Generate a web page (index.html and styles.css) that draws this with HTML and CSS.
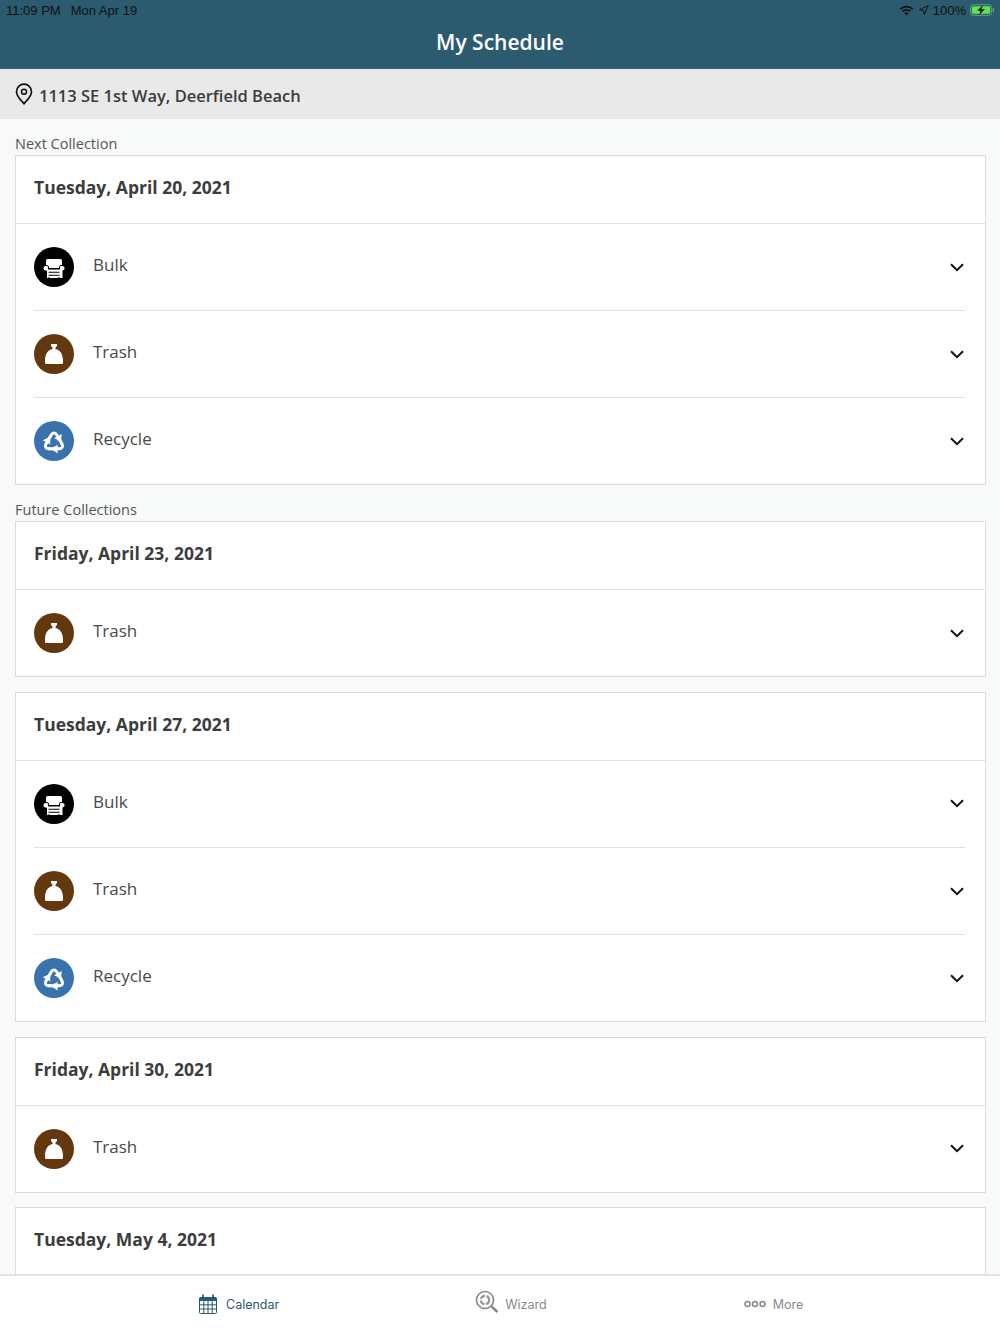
FILE: index.html
```html
<!DOCTYPE html>
<html lang="en">
<head>
<meta charset="utf-8">
<title>My Schedule</title>
<link rel="stylesheet" href="styles.css">
</head>
<body>
<svg class="defs" width="0" height="0" aria-hidden="true">
  <symbol id="chev" viewBox="0 0 14 9"><path d="M1 1.200 7 7.200 13 1.200" fill="none" stroke="#111" stroke-width="2"/></symbol>
  <symbol id="bulk" viewBox="0 0 40 40">
    <path fill="#fff" d="M13.500 12h13a1.500 1.500 0 0 1 1.500 1.500V18h-.5a2.500 2.500 0 0 0-2.500 2.500V21H15v-.5a2.500 2.500 0 0 0-2.500-2.500H12v-4.500a1.500 1.500 0 0 1 1.500-1.500z"/>
    <path fill="#fff" d="M11.500 19h1.200a1.300 1.300 0 0 1 1.300 1.300V22.500h12v-2.200a1.300 1.300 0 0 1 1.300-1.300h1.200a2.200 2.200 0 0 1 1 4.100l-1 .5V31H13v-6.900l-1-.5a2.200 2.200 0 0 1-.5-4.600z"/>
    <path fill="#000" d="M14.500 24.800h11v1H14.500zM14.500 27.800h11v1H14.500zM14.500 30h1v1h-1zM24.500 30h1v1h-1z"/>
  </symbol>
  <symbol id="trash" viewBox="0 0 40 40">
    <path fill="#fff" d="M17 10h6v1.800l-1.500 2v1.100c4.500.7 7.300 5 7.500 11.100v2.500a1.500 1.500 0 0 1-1.500 1.500h-15a1.500 1.500 0 0 1-1.500-1.500V26c.2-6.100 3-10.400 7.500-11.100v-1.100l-1.500-2z"/>
  </symbol>
  <symbol id="recycle" viewBox="0 0 40 40">
    <g id="rc-arrow" fill="#fff">
      <path d="M12.800 18.200 16.200 12.700Q18 10.500 20 10.500T23.800 12.700L24.900 14.500 27.700 12.900 27 20.600 20.100 17.300 22.300 16 21 14C20.300 13.100 19.700 13.100 19 14L16.500 18.200 16.300 20.300z"/>
    </g>
    <g fill="#fff" transform="rotate(120 20 21.500)"><path d="M12.800 18.200 16.200 12.700Q18 10.500 20 10.500T23.800 12.700L24.900 14.500 27.700 12.900 27 20.600 20.100 17.300 22.300 16 21 14C20.300 13.100 19.700 13.100 19 14L16.500 18.200 16.300 20.300z"/></g>
    <g fill="#fff" transform="rotate(240 20 21.500)"><path d="M12.800 18.200 16.200 12.700Q18 10.500 20 10.500T23.800 12.700L24.900 14.500 27.700 12.900 27 20.600 20.100 17.300 22.300 16 21 14C20.300 13.100 19.700 13.100 19 14L16.500 18.200 16.300 20.300z"/></g>
  </symbol>
</svg>
<div class="app">
  <header class="topbar">
    <div class="status">
      <div class="status-left"><span>11:09 PM</span><span>Mon Apr 19</span></div>
      <div class="status-right">
        <svg class="wifi" viewBox="0 0 16 12" width="15" height="11"><path d="M8 11.500 5.700 9a3.300 3.300 0 0 1 4.600 0zM4.500 7.800 3.200 6.400a6.900 6.900 0 0 1 9.600 0l-1.300 1.400a5 5 0 0 0-7 0zM2 5.200.6 3.800a10.600 10.600 0 0 1 14.800 0L14 5.200a8.700 8.700 0 0 0-12 0z" fill="#111"/></svg>
        <svg class="loc" viewBox="0 0 10 10" width="10" height="10"><path d="M9.300.7 5.300 9.300 4.500 5.500.7 4.700z" fill="none" stroke="#111" stroke-width="1"/></svg>
        <span>100%</span>
        <svg class="batt" viewBox="0 0 26 12" width="25" height="12"><rect x=".5" y=".5" width="22" height="11" rx="3" fill="none" stroke="#5fae60"/><rect x="2" y="2" width="19" height="8" rx="1.500" fill="#5fe05f"/><rect x="23.500" y="4" width="1.500" height="4" rx=".7" fill="#5fae60"/><path d="M13.500 .8 7.500 6.800h3.600L9.500 11.200l6-6h-3.600z" fill="#111"/></svg>
      </div>
    </div>
    <h1 class="title">My Schedule</h1>
  </header>
  <div class="address">
    <svg class="pin" viewBox="0 0 18 22" width="18" height="22"><path d="M9 1.200a7.500 7.500 0 0 1 7.500 7.500c0 4.800-4.600 8.600-7.500 12-2.900-3.400-7.500-7.200-7.500-12A7.500 7.500 0 0 1 9 1.200z" fill="none" stroke="#111" stroke-width="1.700"/><circle cx="9" cy="8.700" r="2.500" fill="none" stroke="#111" stroke-width="1.500"/></svg>
    <span class="address-text">1113 SE 1st Way, Deerfield Beach</span>
  </div>
  <main class="content">
    <div class="label">Next Collection</div>
    <section class="card">
      <h2 class="date">Tuesday, April 20, 2021</h2>
      <div class="row"><span class="badge bulk-bg"><svg><use href="#bulk"/></svg></span><span class="name">Bulk</span><svg class="chev"><use href="#chev"/></svg></div>
      <div class="row"><span class="badge trash-bg"><svg><use href="#trash"/></svg></span><span class="name">Trash</span><svg class="chev"><use href="#chev"/></svg></div>
      <div class="row"><span class="badge recycle-bg"><svg><use href="#recycle"/></svg></span><span class="name">Recycle</span><svg class="chev"><use href="#chev"/></svg></div>
    </section>
    <div class="label label-next">Future Collections</div>
    <section class="card">
      <h2 class="date">Friday, April 23, 2021</h2>
      <div class="row"><span class="badge trash-bg"><svg><use href="#trash"/></svg></span><span class="name">Trash</span><svg class="chev"><use href="#chev"/></svg></div>
    </section>
    <section class="card gap">
      <h2 class="date">Tuesday, April 27, 2021</h2>
      <div class="row"><span class="badge bulk-bg"><svg><use href="#bulk"/></svg></span><span class="name">Bulk</span><svg class="chev"><use href="#chev"/></svg></div>
      <div class="row"><span class="badge trash-bg"><svg><use href="#trash"/></svg></span><span class="name">Trash</span><svg class="chev"><use href="#chev"/></svg></div>
      <div class="row"><span class="badge recycle-bg"><svg><use href="#recycle"/></svg></span><span class="name">Recycle</span><svg class="chev"><use href="#chev"/></svg></div>
    </section>
    <section class="card gap">
      <h2 class="date">Friday, April 30, 2021</h2>
      <div class="row"><span class="badge trash-bg"><svg><use href="#trash"/></svg></span><span class="name">Trash</span><svg class="chev"><use href="#chev"/></svg></div>
    </section>
    <section class="card gap">
      <h2 class="date">Tuesday, May 4, 2021</h2>
    </section>
  </main>
  <nav class="tabs">
    <div class="tab tab-active tab-cal">
      <svg viewBox="0 0 20 22" width="20" height="22"><path d="M1 5.500a1.500 1.500 0 0 1 1.500-1.500h15A1.500 1.500 0 0 1 19 5.500V8H1z" fill="#2c5a6e"/><path d="M5 1.500v4M15 1.500v4" stroke="#2c5a6e" stroke-width="1.800"/><path d="M1.500 7.500h17v12a1 1 0 0 1-1 1h-15a1 1 0 0 1-1-1zM1.500 11.800h17M1.500 16h17M5.800 7.500v13M10 7.500v13M14.200 7.500v13" fill="none" stroke="#2c5a6e" stroke-width="1"/></svg>
      <span>Calendar</span>
    </div>
    <div class="tab tab-wiz">
      <svg viewBox="0 0 24 24" width="24" height="24"><circle cx="10" cy="10" r="8.500" fill="none" stroke="#888" stroke-width="1.600"/><circle cx="10" cy="10" r="4.200" fill="none" stroke="#999" stroke-width="2.200" stroke-dasharray="5.500 1.500"/><path d="M16.500 16.500 22.500 22" stroke="#888" stroke-width="2.400"/></svg>
      <span>Wizard</span>
    </div>
    <div class="tab tab-more">
      <svg viewBox="0 0 22 8" width="22" height="8"><circle cx="3.500" cy="4" r="2.500" fill="none" stroke="#888" stroke-width="1.500"/><circle cx="11" cy="4" r="2.500" fill="none" stroke="#888" stroke-width="1.500"/><circle cx="18.500" cy="4" r="2.500" fill="none" stroke="#888" stroke-width="1.500"/></svg>
      <span>More</span>
    </div>
  </nav>
</div>
</body>
</html>
```
FILE: styles.css
```css
* { box-sizing: border-box; }
html, body { margin: 0; padding: 0; height: 100%; }
body { font-family: "Open Sans", sans-serif; color: #3c3c3c; background: #f8f9f9; overflow: hidden; }
.defs { position: absolute; }
.app { display: flex; flex-direction: column; height: 1334px; }

.topbar { height: 69px; background: #2c5a6e; flex: none; border-bottom: 1px solid #3b6476; }
.status { display: flex; justify-content: space-between; align-items: center; height: 20px; padding: 0 5px 0 6px; font-family: "Liberation Sans", sans-serif; font-size: 13px; color: #111; }
.status-left { display: flex; gap: 10px; }
.status-right { display: flex; align-items: center; gap: 4px; }
.wifi { margin-right: 1px; }
.title { margin: 0; padding-top: 8px; text-align: center; font-size: 21px; line-height: 28px; font-weight: 600; color: #fff; }

.address { height: 50px; flex: none; display: flex; align-items: center; gap: 6px; padding-left: 15px; background: #e9e9e9; }
.address-text { font-size: 16.500px; font-weight: 600; color: #3c3c3c; margin-top: 2px; }

.content { flex: 1; min-height: 0; overflow: hidden; padding: 0 14px 0 15px; }
.label { font-size: 14.500px; line-height: 19px; color: #555; padding-top: 15px; height: 36px; }
.card { background: #fff; border: 1px solid #dcdcdc; }
.gap { margin-top: 14.500px; }
.date { margin: 0; height: 68px; display: flex; align-items: center; padding: 0 0 5px 18px; font-size: 17.500px; font-weight: 700; color: #3c3c3c; border-bottom: 1px solid #dfdfdf; }
.row { height: 87.200px; margin: 0 20px 0 18px; display: flex; align-items: center; border-bottom: 1px solid #dfdfdf; }
.row:last-child { border-bottom: 0; height: 86px; }
.badge { width: 40px; height: 40px; border-radius: 50%; flex: none; display: block; }
.badge svg { width: 40px; height: 40px; display: block; }
.bulk-bg { background: #000; }
.trash-bg { background: #63380f; }
.recycle-bg { background: #3a72ad; }
.name { margin-left: 19px; flex: 1; font-size: 17px; color: #4a4a4a; margin-top: -5px; }
.chev { width: 14px; height: 9px; flex: none; margin-right: 1px; }

.tabs { height: 60px; flex: none; position: relative; background: #fff; border-top: 2px solid #e2e2e2; display: flex; font-family: Inter, sans-serif; font-size: 12.500px; color: #8a8a8a; }
.tab { display: flex; align-items: center; gap: 7px; padding-bottom: 2px; }
.tab-active { color: #2c5a6e; }
.tab-cal { margin-left: 198px; gap: 8px; }
.tab-wiz { margin-left: 196px; gap: 6px; }
.tab-wiz svg { margin-top: -4px; }
.tab-more { margin-left: 197px; }
.tab-more svg { margin-top: -1px; }
```
